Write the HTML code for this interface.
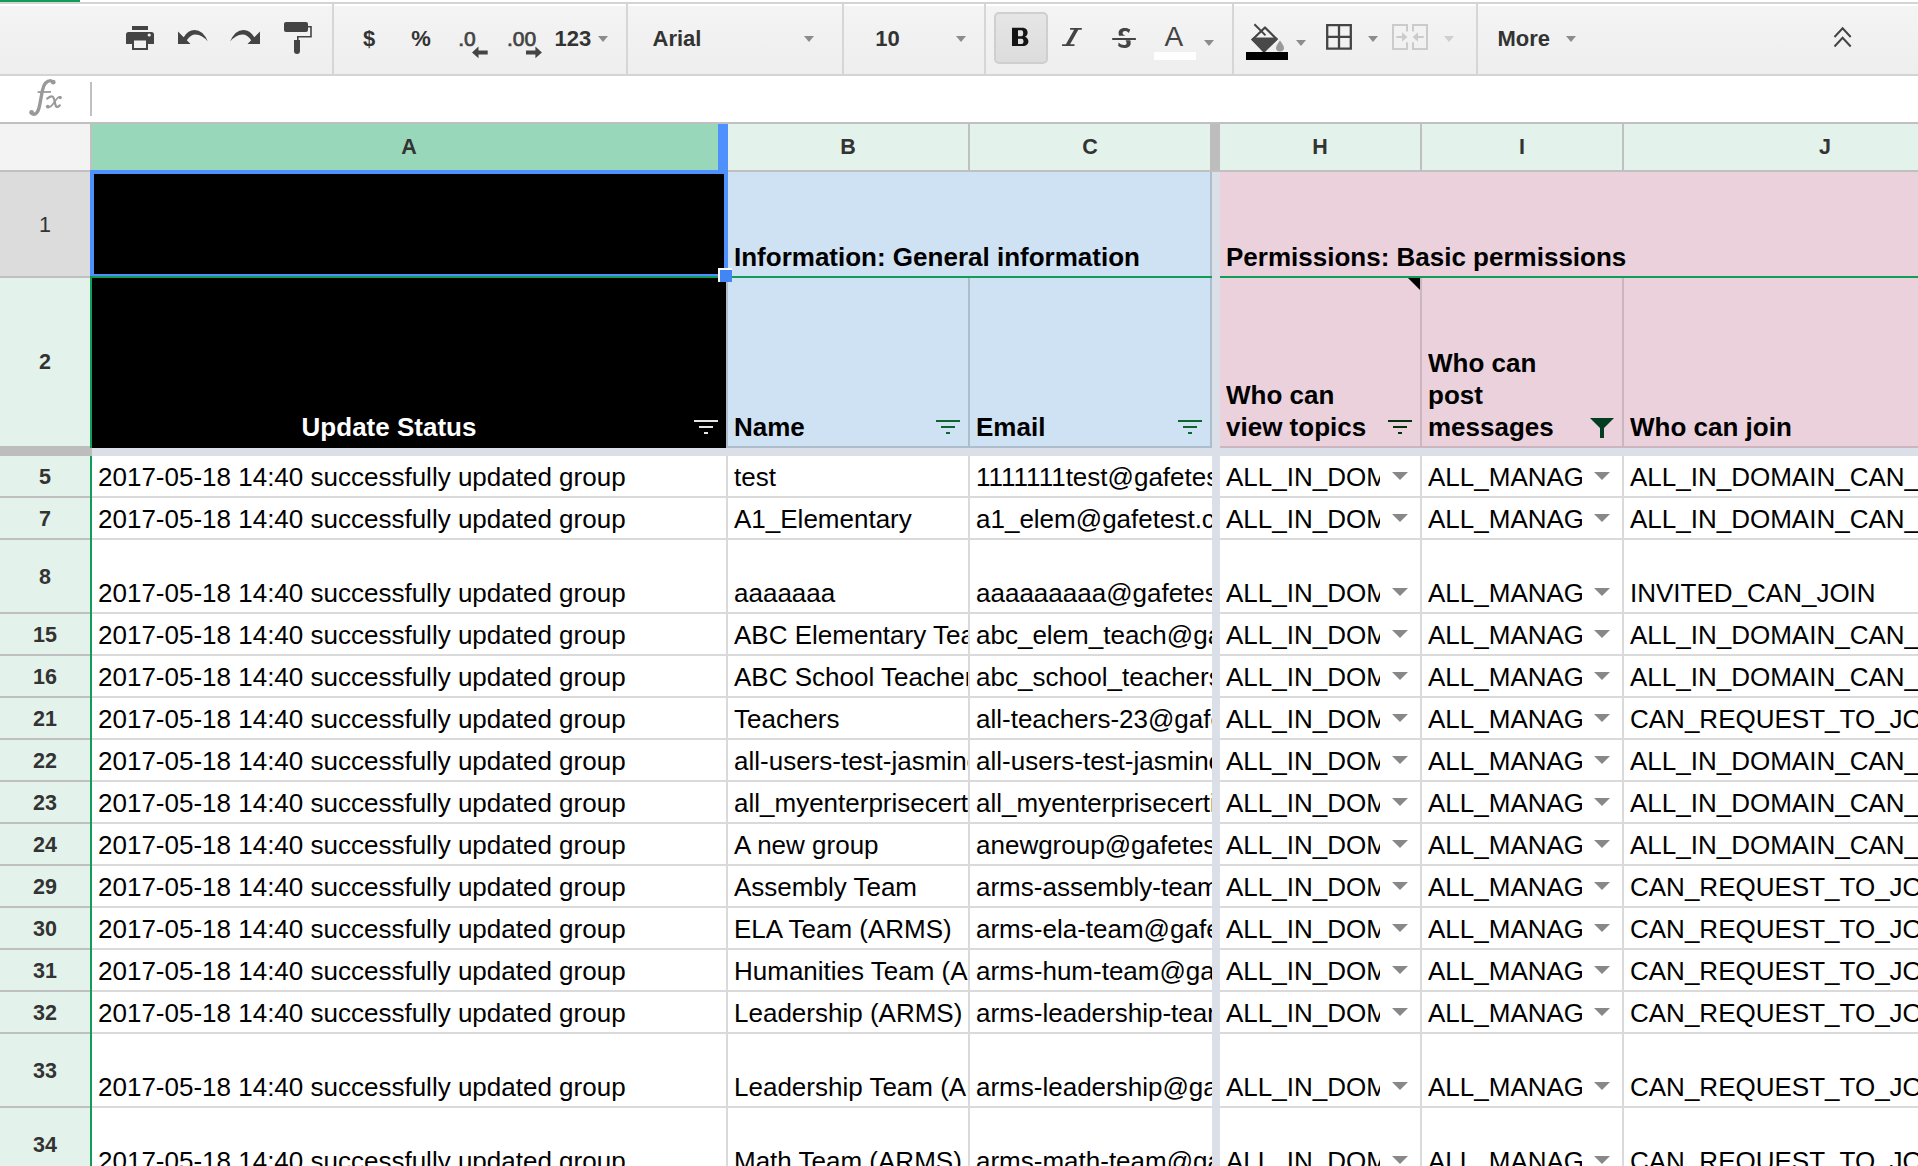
<!DOCTYPE html><html><head><meta charset="utf-8"><style>
*{margin:0;padding:0;box-sizing:border-box}
html,body{width:1918px;height:1166px;overflow:hidden;background:#fff}
body{position:relative;font-family:"Liberation Sans",sans-serif}
.r{position:absolute}
.t{position:absolute;height:30px;line-height:30px;font-size:26px;color:#000;white-space:pre;overflow:hidden}
.b{font-weight:bold}
.hd{position:absolute;font-weight:bold;font-size:21.5px;color:#333;text-align:center;white-space:pre}
svg{position:absolute;overflow:visible}
</style></head><body>
<div class="r" style="left:0px;top:2px;width:1918px;height:2px;background:#d4d4d4;"></div>
<div class="r" style="left:0px;top:0px;width:80px;height:2px;background:#0f9d58;"></div>
<div class="r" style="left:0px;top:4px;width:1918px;height:2px;background:#fff;"></div>
<div class="r" style="left:0px;top:6px;width:1918px;height:68px;background:linear-gradient(#f4f4f4,#eeeeee);"></div>
<div class="r" style="left:0px;top:74px;width:1918px;height:2px;background:#d4d4d4;"></div>
<div class="r" style="left:332px;top:4px;width:2px;height:70px;background:#d6d6d6;"></div>
<div class="r" style="left:626px;top:4px;width:2px;height:70px;background:#d6d6d6;"></div>
<div class="r" style="left:842px;top:4px;width:2px;height:70px;background:#d6d6d6;"></div>
<div class="r" style="left:984px;top:4px;width:2px;height:70px;background:#d6d6d6;"></div>
<div class="r" style="left:1232px;top:4px;width:2px;height:70px;background:#d6d6d6;"></div>
<div class="r" style="left:1476px;top:4px;width:2px;height:70px;background:#d6d6d6;"></div>
<svg style="left:0;top:0" width="1918" height="76"><rect x="132" y="26" width="16" height="4" fill="#444"/><path d="M126 44V34.5Q126 32 128.5 32H151.5Q154 32 154 34.5V44H148V50H132V44Z" fill="#444"/><rect x="134" y="40.5" width="12" height="7.5" fill="#f1f1f1"/><circle cx="149.2" cy="35" r="1.6" fill="#f1f1f1"/><path fill="#444" d="M178 31.5V44H190.5L186.8 40.3Q190.6 34.4 195.5 34.4Q202.5 34.6 207.8 41.6Q203.2 30 194.5 30Q188 30 183.7 37.2Z"/><path fill="#444" transform="translate(438 0) scale(-1 1)" d="M178 31.5V44H190.5L186.8 40.3Q190.6 34.4 195.5 34.4Q202.5 34.6 207.8 41.6Q203.2 30 194.5 30Q188 30 183.7 37.2Z"/><path fill="#444" d="M286 22H306Q308 22 308 24V30Q308 32 306 32H286Q284 32 284 30V24Q284 22 286 22Z"/><path fill="none" stroke="#444" stroke-width="1.6" d="M308 26.8H311V36.8H297.8V40"/><path fill="#444" d="M294 40H300V51Q300 54 297 54Q294 54 294 51Z"/><text x="369" y="46" font-family="Liberation Sans" font-size="22" font-weight="bold" font-style="normal" fill="#333" text-anchor="middle" >$</text><text x="421" y="46" font-family="Liberation Sans" font-size="22" font-weight="bold" font-style="normal" fill="#333" text-anchor="middle" >%</text><text x="467" y="46" font-family="Liberation Sans" font-size="21" font-weight="normal" font-style="normal" fill="#444" text-anchor="middle" stroke="#444" stroke-width="0.7">.0</text><text x="521.5" y="46" font-family="Liberation Sans" font-size="21" font-weight="normal" font-style="normal" fill="#444" text-anchor="middle" stroke="#444" stroke-width="0.7">.00</text><text x="572.8" y="46" font-family="Liberation Sans" font-size="22" font-weight="bold" font-style="normal" fill="#333" text-anchor="middle" >123</text><text x="652.5" y="46" font-family="Liberation Sans" font-size="22" font-weight="bold" font-style="normal" fill="#333" text-anchor="start" >Arial</text><text x="875.3" y="46" font-family="Liberation Sans" font-size="22" font-weight="bold" font-style="normal" fill="#333" text-anchor="start" >10</text><text x="1497.4" y="46" font-family="Liberation Sans" font-size="22" font-weight="bold" font-style="normal" fill="#333" text-anchor="start" >More</text><path fill="#444" d="M472 52.4L478.5 46.6V50.4H487.7V54.4H478.5V58.2Z"/><path fill="#444" d="M541.9 52.4L535.4 46.6V50.4H526V54.4H535.4V58.2Z"/><path fill="#8c8c8c" d="M598 36H608L603.0 42Z"/><path fill="#8c8c8c" d="M804 36H814L809.0 42Z"/><path fill="#8c8c8c" d="M956 36H966L961.0 42Z"/><path fill="#8c8c8c" d="M1204 40H1214L1209.0 46Z"/><path fill="#8c8c8c" d="M1296 40H1306L1301.0 46Z"/><path fill="#8c8c8c" d="M1368 36H1378L1373.0 42Z"/><path fill="#cfcfcf" d="M1444 36H1454L1449.0 42Z"/><path fill="#8c8c8c" d="M1566 36H1576L1571.0 42Z"/><defs><linearGradient id="bg1" x1="0" y1="0" x2="0" y2="1"><stop offset="0" stop-color="#e6e6e6"/><stop offset="1" stop-color="#dcdcdc"/></linearGradient></defs><rect x="995" y="13" width="52" height="50" rx="4" fill="url(#bg1)" stroke="#cfcfcf" stroke-width="2"/><path fill="#151515" fill-rule="evenodd" d="M1012 27.8H1022.3C1025.9 27.8 1027.6 30 1027.6 32.5C1027.6 34.6 1026.6 36 1025 36.8C1027.3 37.5 1028.4 39.5 1028.4 41.6C1028.4 44.3 1026.3 46.1 1022.8 46.1H1012Z M1018 30.2H1021.3C1022.6 30.2 1023.2 31.5 1023.2 33.2C1023.2 35 1022.6 36.2 1021.3 36.2H1018Z M1018 38.7H1021.6C1022.9 38.7 1023.5 40 1023.5 41.3C1023.5 42.8 1022.9 44 1021.6 44H1018Z"/><path fill="#444" d="M1070.1 28H1081.8V29.8H1078.3L1070.1 44.2H1074.5V46H1062.1V44.2H1065.9L1074.1 29.8H1070.1Z"/><path fill="#444" d="M1130.3 29.6C1128.5 28.3 1126.5 27.9 1124.5 27.9C1120.5 27.9 1118.6 30.2 1118.6 33C1118.6 34.1 1118.8 35 1119.1 35.7H1125.3C1123.4 35 1122.6 34.1 1122.6 33.1C1122.6 31.8 1123.6 31.1 1125.1 31.1C1126.3 31.1 1127.6 31.6 1128.8 32.9Z M1125.6 40.2H1130.2C1130.5 41 1130.7 42 1130.7 43C1130.7 46.2 1128.2 48.1 1124.3 48.1C1121.8 48.1 1119.7 47.3 1118.2 46.1L1118.6 42.6C1120.1 44.3 1122.1 45.1 1124 45.1C1125.7 45.1 1126.6 44.4 1126.6 43.3C1126.6 42 1126 41 1125.6 40.2Z"/><rect x="1112.2" y="38" width="23.7" height="2" fill="#444"/><text x="1173.8" y="46" font-family="Liberation Sans" font-size="28" font-weight="normal" font-style="normal" fill="#444" text-anchor="middle" >A</text><rect x="1154" y="52" width="42" height="8" fill="#fff"/><path d="M1254.4 24.3L1265.5 35.4" stroke="#444" stroke-width="2"/><path d="M1265 27.5L1276.5 39L1264 51.4L1252.5 39.5Z" fill="none" stroke="#444" stroke-width="2.2" stroke-linejoin="round"/><path d="M1253.3 37.9H1276.4L1277.6 39.2L1264 51.6L1251.4 39.5Z" fill="#494949" stroke="#494949" stroke-width="0.8" stroke-linejoin="round"/><path d="M1280 40.6Q1284 46 1284 48Q1284 51.4 1280 51.4Q1276 51.4 1276 48Q1276 46 1280 40.6Z" fill="#9a9a9a"/><rect x="1246" y="52" width="42" height="8" fill="#000"/><path d="M1327.2 25.2H1350.8V48.6H1327.2Z M1339 25.2V48.6 M1327.2 36.9H1350.8" fill="none" stroke="#444" stroke-width="2.3"/><path d="M1407 31.6V25H1393V49H1407V42.2 M1413 31.6V25H1427V49H1413V42.2" fill="none" stroke="#cbcbcb" stroke-width="2"/><path d="M1396.3 36H1402V32.3L1407.4 37L1402 41.7V38H1396.3Z" fill="#cbcbcb"/><path d="M1423.7 36H1418V32.3L1412.6 37L1418 41.7V38H1423.7Z" fill="#cbcbcb"/><path d="M1834.5 37L1842.6 28.2L1850.7 37 M1834.5 46.5L1842.6 37.7L1850.7 46.5" fill="none" stroke="#444" stroke-width="2"/></svg>
<div class="r" style="left:0px;top:122px;width:1918px;height:2px;background:#c0c0c0;"></div>
<div class="r" style="left:90px;top:82px;width:2px;height:34px;background:#c0c0c0;"></div>
<svg style="left:0;top:0" width="100" height="122"><g fill="none" stroke="#999" stroke-linecap="round"><path d="M32 113.6C35.5 115.6 38.3 112.5 39.6 105.5L42.4 90.5C43.8 83.5 46.8 80.6 50.8 80.6" stroke-width="3.4"/><path d="M37.6 92.1L51 91.8" stroke-width="1.7" stroke-linecap="butt"/><path d="M47.2 98.6C49.5 96.8 51.5 96 52.6 96.6C54.2 97.6 54.6 101 55.2 104C55.7 106.6 56.8 107.6 58.2 106.6L59.8 105.3" stroke-width="2.2"/><path d="M48 107.5C50 107.6 51.5 106 53 104L56.8 98.8C58 97.3 59.2 96.6 60.4 96.8" stroke-width="1.6"/></g><g fill="#999"><circle cx="31.6" cy="112.4" r="2.4"/><circle cx="53.2" cy="82.2" r="2.4"/><circle cx="47.8" cy="106.6" r="1.9"/><circle cx="60.2" cy="97.6" r="1.7"/></g></svg>
<div class="r" style="left:0px;top:124px;width:90px;height:46px;background:#f3f3f3;"></div>
<div class="r" style="left:90px;top:124px;width:2px;height:46px;background:#c0c0c0;"></div>
<div class="r" style="left:92px;top:124px;width:626px;height:46px;background:#98d7b9;"></div>
<div class="r" style="left:718px;top:124px;width:10px;height:46px;background:#4d90fe;"></div>
<div class="r" style="left:728px;top:124px;width:240px;height:46px;background:#e3f2ea;"></div>
<div class="r" style="left:968px;top:124px;width:2px;height:46px;background:#c0c0c0;"></div>
<div class="r" style="left:970px;top:124px;width:240px;height:46px;background:#e3f2ea;"></div>
<div class="r" style="left:1210px;top:124px;width:10px;height:46px;background:#bdbdbd;"></div>
<div class="r" style="left:1220px;top:124px;width:200px;height:46px;background:#e3f2ea;"></div>
<div class="r" style="left:1420px;top:124px;width:2px;height:46px;background:#c0c0c0;"></div>
<div class="r" style="left:1422px;top:124px;width:200px;height:46px;background:#e3f2ea;"></div>
<div class="r" style="left:1622px;top:124px;width:2px;height:46px;background:#c0c0c0;"></div>
<div class="r" style="left:1624px;top:124px;width:294px;height:46px;background:#e3f2ea;"></div>
<div class="r" style="left:0px;top:170px;width:1918px;height:2px;background:#c0c0c0;"></div>
<div class="hd" style="left:369px;top:135px;width:80px;line-height:24px">A</div>
<div class="hd" style="left:808px;top:135px;width:80px;line-height:24px">B</div>
<div class="hd" style="left:1050px;top:135px;width:80px;line-height:24px">C</div>
<div class="hd" style="left:1280px;top:135px;width:80px;line-height:24px">H</div>
<div class="hd" style="left:1482px;top:135px;width:80px;line-height:24px">I</div>
<div class="hd" style="left:1785px;top:135px;width:80px;line-height:24px">J</div>
<div class="r" style="left:0px;top:172px;width:90px;height:104px;background:#dcdcdc;"></div>
<div class="r" style="left:0px;top:276px;width:90px;height:2px;background:#c0c0c0;"></div>
<div class="r" style="left:0px;top:278px;width:90px;height:168px;background:#e3f2ea;"></div>
<div class="r" style="left:0px;top:446px;width:92px;height:10px;background:#bdbdbd;"></div>
<div class="hd" style="left:0;top:213px;width:90px;line-height:24px;font-weight:normal">1</div>
<div class="hd" style="left:0;top:350px;width:90px;line-height:24px">2</div>
<div class="r" style="left:0px;top:456px;width:90px;height:40px;background:#e3f2ea;"></div>
<div class="r" style="left:0px;top:496px;width:90px;height:2px;background:#c0c0c0;"></div>
<div class="hd" style="left:0;top:465px;width:90px;line-height:24px">5</div>
<div class="r" style="left:0px;top:498px;width:90px;height:40px;background:#e3f2ea;"></div>
<div class="r" style="left:0px;top:538px;width:90px;height:2px;background:#c0c0c0;"></div>
<div class="hd" style="left:0;top:507px;width:90px;line-height:24px">7</div>
<div class="r" style="left:0px;top:540px;width:90px;height:72px;background:#e3f2ea;"></div>
<div class="r" style="left:0px;top:612px;width:90px;height:2px;background:#c0c0c0;"></div>
<div class="hd" style="left:0;top:565px;width:90px;line-height:24px">8</div>
<div class="r" style="left:0px;top:614px;width:90px;height:40px;background:#e3f2ea;"></div>
<div class="r" style="left:0px;top:654px;width:90px;height:2px;background:#c0c0c0;"></div>
<div class="hd" style="left:0;top:623px;width:90px;line-height:24px">15</div>
<div class="r" style="left:0px;top:656px;width:90px;height:40px;background:#e3f2ea;"></div>
<div class="r" style="left:0px;top:696px;width:90px;height:2px;background:#c0c0c0;"></div>
<div class="hd" style="left:0;top:665px;width:90px;line-height:24px">16</div>
<div class="r" style="left:0px;top:698px;width:90px;height:40px;background:#e3f2ea;"></div>
<div class="r" style="left:0px;top:738px;width:90px;height:2px;background:#c0c0c0;"></div>
<div class="hd" style="left:0;top:707px;width:90px;line-height:24px">21</div>
<div class="r" style="left:0px;top:740px;width:90px;height:40px;background:#e3f2ea;"></div>
<div class="r" style="left:0px;top:780px;width:90px;height:2px;background:#c0c0c0;"></div>
<div class="hd" style="left:0;top:749px;width:90px;line-height:24px">22</div>
<div class="r" style="left:0px;top:782px;width:90px;height:40px;background:#e3f2ea;"></div>
<div class="r" style="left:0px;top:822px;width:90px;height:2px;background:#c0c0c0;"></div>
<div class="hd" style="left:0;top:791px;width:90px;line-height:24px">23</div>
<div class="r" style="left:0px;top:824px;width:90px;height:40px;background:#e3f2ea;"></div>
<div class="r" style="left:0px;top:864px;width:90px;height:2px;background:#c0c0c0;"></div>
<div class="hd" style="left:0;top:833px;width:90px;line-height:24px">24</div>
<div class="r" style="left:0px;top:866px;width:90px;height:40px;background:#e3f2ea;"></div>
<div class="r" style="left:0px;top:906px;width:90px;height:2px;background:#c0c0c0;"></div>
<div class="hd" style="left:0;top:875px;width:90px;line-height:24px">29</div>
<div class="r" style="left:0px;top:908px;width:90px;height:40px;background:#e3f2ea;"></div>
<div class="r" style="left:0px;top:948px;width:90px;height:2px;background:#c0c0c0;"></div>
<div class="hd" style="left:0;top:917px;width:90px;line-height:24px">30</div>
<div class="r" style="left:0px;top:950px;width:90px;height:40px;background:#e3f2ea;"></div>
<div class="r" style="left:0px;top:990px;width:90px;height:2px;background:#c0c0c0;"></div>
<div class="hd" style="left:0;top:959px;width:90px;line-height:24px">31</div>
<div class="r" style="left:0px;top:992px;width:90px;height:40px;background:#e3f2ea;"></div>
<div class="r" style="left:0px;top:1032px;width:90px;height:2px;background:#c0c0c0;"></div>
<div class="hd" style="left:0;top:1001px;width:90px;line-height:24px">32</div>
<div class="r" style="left:0px;top:1034px;width:90px;height:72px;background:#e3f2ea;"></div>
<div class="r" style="left:0px;top:1106px;width:90px;height:2px;background:#c0c0c0;"></div>
<div class="hd" style="left:0;top:1059px;width:90px;line-height:24px">33</div>
<div class="r" style="left:0px;top:1108px;width:90px;height:72px;background:#e3f2ea;"></div>
<div class="r" style="left:0px;top:1180px;width:90px;height:2px;background:#c0c0c0;"></div>
<div class="hd" style="left:0;top:1133px;width:90px;line-height:24px">34</div>
<div class="r" style="left:90px;top:278px;width:2px;height:170px;background:#0f9d58;"></div>
<div class="r" style="left:90px;top:456px;width:2px;height:710px;background:#0f9d58;"></div>
<div class="r" style="left:92px;top:172px;width:634px;height:276px;background:#000;"></div>
<div class="r" style="left:728px;top:172px;width:482px;height:104px;background:#cfe2f3;"></div>
<div class="r" style="left:1220px;top:172px;width:698px;height:104px;background:#ead1dc;"></div>
<div class="r" style="left:726px;top:278px;width:2px;height:170px;background:#adbdcc;"></div>
<div class="r" style="left:728px;top:278px;width:240px;height:168px;background:#cfe2f3;"></div>
<div class="r" style="left:968px;top:278px;width:2px;height:170px;background:#adbdcc;"></div>
<div class="r" style="left:970px;top:278px;width:240px;height:168px;background:#cfe2f3;"></div>
<div class="r" style="left:1210px;top:172px;width:2px;height:276px;background:#adbdcc;"></div>
<div class="r" style="left:728px;top:446px;width:484px;height:2px;background:#adbdcc;"></div>
<div class="r" style="left:1220px;top:278px;width:200px;height:168px;background:#ead1dc;"></div>
<div class="r" style="left:1420px;top:278px;width:2px;height:170px;background:#cbb6c0;"></div>
<div class="r" style="left:1422px;top:278px;width:200px;height:168px;background:#ead1dc;"></div>
<div class="r" style="left:1622px;top:278px;width:2px;height:170px;background:#cbb6c0;"></div>
<div class="r" style="left:1624px;top:278px;width:294px;height:168px;background:#ead1dc;"></div>
<div class="r" style="left:1220px;top:446px;width:698px;height:2px;background:#cbb6c0;"></div>
<div class="r" style="left:90px;top:276px;width:1122px;height:2px;background:#0f9d58;"></div>
<div class="r" style="left:1220px;top:276px;width:698px;height:2px;background:#0f9d58;"></div>
<div class="r" style="left:92px;top:448px;width:1826px;height:8px;background:#dadfe8;"></div>
<div class="r" style="left:1212px;top:172px;width:8px;height:994px;background:#dadfe8;"></div>
<div class="t b" style="left:734px;top:242px;width:470px;">Information: General information</div>
<div class="t b" style="left:1226px;top:242px;width:690px;">Permissions: Basic permissions</div>
<div class="t b" style="left:92px;top:412px;width:594px;color:#fff;text-align:center">Update Status</div>
<div class="t b" style="left:734px;top:412px;width:190px;">Name</div>
<div class="t b" style="left:976px;top:412px;width:190px;">Email</div>
<div class="t b" style="left:1226px;top:380px;width:160px;">Who can</div>
<div class="t b" style="left:1226px;top:412px;width:160px;">view topics</div>
<div class="t b" style="left:1428px;top:348px;width:160px;">Who can</div>
<div class="t b" style="left:1428px;top:380px;width:160px;">post</div>
<div class="t b" style="left:1428px;top:412px;width:160px;">messages</div>
<div class="t b" style="left:1630px;top:412px;width:280px;">Who can join</div>
<div class="r" style="left:694px;top:420px;width:24px;height:2px;background:#e6e6e6;"></div>
<div class="r" style="left:699px;top:426px;width:14px;height:2px;background:#e6e6e6;"></div>
<div class="r" style="left:704px;top:432px;width:4px;height:2px;background:#e6e6e6;"></div>
<div class="r" style="left:936px;top:420px;width:24px;height:2px;background:#0d652d;"></div>
<div class="r" style="left:941px;top:426px;width:14px;height:2px;background:#0d652d;"></div>
<div class="r" style="left:946px;top:432px;width:4px;height:2px;background:#0d652d;"></div>
<div class="r" style="left:1178px;top:420px;width:24px;height:2px;background:#0d652d;"></div>
<div class="r" style="left:1183px;top:426px;width:14px;height:2px;background:#0d652d;"></div>
<div class="r" style="left:1188px;top:432px;width:4px;height:2px;background:#0d652d;"></div>
<div class="r" style="left:1388px;top:420px;width:24px;height:2px;background:#00300f;"></div>
<div class="r" style="left:1393px;top:426px;width:14px;height:2px;background:#00300f;"></div>
<div class="r" style="left:1398px;top:432px;width:4px;height:2px;background:#00300f;"></div>
<svg style="left:0;top:0" width="1918" height="460"><path d="M1590 418H1614L1604 428V438H1600V428Z" fill="#053d22"/><path d="M1408 278H1420V290Z" fill="#000"/></svg>
<div class="r" style="left:92px;top:496px;width:1120px;height:2px;background:#dadada;"></div>
<div class="r" style="left:1220px;top:496px;width:698px;height:2px;background:#dadada;"></div>
<div class="r" style="left:726px;top:456px;width:2px;height:42px;background:#dadada;"></div>
<div class="r" style="left:968px;top:456px;width:2px;height:42px;background:#dadada;"></div>
<div class="r" style="left:1420px;top:456px;width:2px;height:42px;background:#dadada;"></div>
<div class="r" style="left:1622px;top:456px;width:2px;height:42px;background:#dadada;"></div>
<div class="t" style="left:98px;top:462px;width:626px;">2017-05-18 14:40 successfully updated group</div>
<div class="t" style="left:734px;top:462px;width:234px;">test</div>
<div class="t" style="left:976px;top:462px;width:236px;">1111111test@gafetest.com</div>
<div class="t" style="left:1226px;top:462px;width:154px;">ALL_IN_DOMAIN_CAN_VIEW</div>
<div class="t" style="left:1428px;top:462px;width:154px;">ALL_MANAGERS_CAN_POST</div>
<div class="t" style="left:1630px;top:462px;width:288px;">ALL_IN_DOMAIN_CAN_JOIN</div>
<svg style="left:1392px;top:472px" width="16" height="8"><path d="M0 0H16L8 8Z" fill="#888"/></svg>
<svg style="left:1594px;top:472px" width="16" height="8"><path d="M0 0H16L8 8Z" fill="#888"/></svg>
<div class="r" style="left:92px;top:538px;width:1120px;height:2px;background:#dadada;"></div>
<div class="r" style="left:1220px;top:538px;width:698px;height:2px;background:#dadada;"></div>
<div class="r" style="left:726px;top:498px;width:2px;height:42px;background:#dadada;"></div>
<div class="r" style="left:968px;top:498px;width:2px;height:42px;background:#dadada;"></div>
<div class="r" style="left:1420px;top:498px;width:2px;height:42px;background:#dadada;"></div>
<div class="r" style="left:1622px;top:498px;width:2px;height:42px;background:#dadada;"></div>
<div class="t" style="left:98px;top:504px;width:626px;">2017-05-18 14:40 successfully updated group</div>
<div class="t" style="left:734px;top:504px;width:234px;">A1_Elementary</div>
<div class="t" style="left:976px;top:504px;width:236px;">a1_elem@gafetest.com</div>
<div class="t" style="left:1226px;top:504px;width:154px;">ALL_IN_DOMAIN_CAN_VIEW</div>
<div class="t" style="left:1428px;top:504px;width:154px;">ALL_MANAGERS_CAN_POST</div>
<div class="t" style="left:1630px;top:504px;width:288px;">ALL_IN_DOMAIN_CAN_JOIN</div>
<svg style="left:1392px;top:514px" width="16" height="8"><path d="M0 0H16L8 8Z" fill="#888"/></svg>
<svg style="left:1594px;top:514px" width="16" height="8"><path d="M0 0H16L8 8Z" fill="#888"/></svg>
<div class="r" style="left:92px;top:612px;width:1120px;height:2px;background:#dadada;"></div>
<div class="r" style="left:1220px;top:612px;width:698px;height:2px;background:#dadada;"></div>
<div class="r" style="left:726px;top:540px;width:2px;height:74px;background:#dadada;"></div>
<div class="r" style="left:968px;top:540px;width:2px;height:74px;background:#dadada;"></div>
<div class="r" style="left:1420px;top:540px;width:2px;height:74px;background:#dadada;"></div>
<div class="r" style="left:1622px;top:540px;width:2px;height:74px;background:#dadada;"></div>
<div class="t" style="left:98px;top:578px;width:626px;">2017-05-18 14:40 successfully updated group</div>
<div class="t" style="left:734px;top:578px;width:234px;">aaaaaaa</div>
<div class="t" style="left:976px;top:578px;width:236px;">aaaaaaaaa@gafetest.com</div>
<div class="t" style="left:1226px;top:578px;width:154px;">ALL_IN_DOMAIN_CAN_VIEW</div>
<div class="t" style="left:1428px;top:578px;width:154px;">ALL_MANAGERS_CAN_POST</div>
<div class="t" style="left:1630px;top:578px;width:288px;">INVITED_CAN_JOIN</div>
<svg style="left:1392px;top:588px" width="16" height="8"><path d="M0 0H16L8 8Z" fill="#888"/></svg>
<svg style="left:1594px;top:588px" width="16" height="8"><path d="M0 0H16L8 8Z" fill="#888"/></svg>
<div class="r" style="left:92px;top:654px;width:1120px;height:2px;background:#dadada;"></div>
<div class="r" style="left:1220px;top:654px;width:698px;height:2px;background:#dadada;"></div>
<div class="r" style="left:726px;top:614px;width:2px;height:42px;background:#dadada;"></div>
<div class="r" style="left:968px;top:614px;width:2px;height:42px;background:#dadada;"></div>
<div class="r" style="left:1420px;top:614px;width:2px;height:42px;background:#dadada;"></div>
<div class="r" style="left:1622px;top:614px;width:2px;height:42px;background:#dadada;"></div>
<div class="t" style="left:98px;top:620px;width:626px;">2017-05-18 14:40 successfully updated group</div>
<div class="t" style="left:734px;top:620px;width:234px;">ABC Elementary Teachers</div>
<div class="t" style="left:976px;top:620px;width:236px;">abc_elem_teach@gafetest.com</div>
<div class="t" style="left:1226px;top:620px;width:154px;">ALL_IN_DOMAIN_CAN_VIEW</div>
<div class="t" style="left:1428px;top:620px;width:154px;">ALL_MANAGERS_CAN_POST</div>
<div class="t" style="left:1630px;top:620px;width:288px;">ALL_IN_DOMAIN_CAN_JOIN</div>
<svg style="left:1392px;top:630px" width="16" height="8"><path d="M0 0H16L8 8Z" fill="#888"/></svg>
<svg style="left:1594px;top:630px" width="16" height="8"><path d="M0 0H16L8 8Z" fill="#888"/></svg>
<div class="r" style="left:92px;top:696px;width:1120px;height:2px;background:#dadada;"></div>
<div class="r" style="left:1220px;top:696px;width:698px;height:2px;background:#dadada;"></div>
<div class="r" style="left:726px;top:656px;width:2px;height:42px;background:#dadada;"></div>
<div class="r" style="left:968px;top:656px;width:2px;height:42px;background:#dadada;"></div>
<div class="r" style="left:1420px;top:656px;width:2px;height:42px;background:#dadada;"></div>
<div class="r" style="left:1622px;top:656px;width:2px;height:42px;background:#dadada;"></div>
<div class="t" style="left:98px;top:662px;width:626px;">2017-05-18 14:40 successfully updated group</div>
<div class="t" style="left:734px;top:662px;width:234px;">ABC School Teachers</div>
<div class="t" style="left:976px;top:662px;width:236px;">abc_school_teachers@gafetest.com</div>
<div class="t" style="left:1226px;top:662px;width:154px;">ALL_IN_DOMAIN_CAN_VIEW</div>
<div class="t" style="left:1428px;top:662px;width:154px;">ALL_MANAGERS_CAN_POST</div>
<div class="t" style="left:1630px;top:662px;width:288px;">ALL_IN_DOMAIN_CAN_JOIN</div>
<svg style="left:1392px;top:672px" width="16" height="8"><path d="M0 0H16L8 8Z" fill="#888"/></svg>
<svg style="left:1594px;top:672px" width="16" height="8"><path d="M0 0H16L8 8Z" fill="#888"/></svg>
<div class="r" style="left:92px;top:738px;width:1120px;height:2px;background:#dadada;"></div>
<div class="r" style="left:1220px;top:738px;width:698px;height:2px;background:#dadada;"></div>
<div class="r" style="left:726px;top:698px;width:2px;height:42px;background:#dadada;"></div>
<div class="r" style="left:968px;top:698px;width:2px;height:42px;background:#dadada;"></div>
<div class="r" style="left:1420px;top:698px;width:2px;height:42px;background:#dadada;"></div>
<div class="r" style="left:1622px;top:698px;width:2px;height:42px;background:#dadada;"></div>
<div class="t" style="left:98px;top:704px;width:626px;">2017-05-18 14:40 successfully updated group</div>
<div class="t" style="left:734px;top:704px;width:234px;">Teachers</div>
<div class="t" style="left:976px;top:704px;width:236px;">all-teachers-23@gafetest.com</div>
<div class="t" style="left:1226px;top:704px;width:154px;">ALL_IN_DOMAIN_CAN_VIEW</div>
<div class="t" style="left:1428px;top:704px;width:154px;">ALL_MANAGERS_CAN_POST</div>
<div class="t" style="left:1630px;top:704px;width:288px;">CAN_REQUEST_TO_JOIN</div>
<svg style="left:1392px;top:714px" width="16" height="8"><path d="M0 0H16L8 8Z" fill="#888"/></svg>
<svg style="left:1594px;top:714px" width="16" height="8"><path d="M0 0H16L8 8Z" fill="#888"/></svg>
<div class="r" style="left:92px;top:780px;width:1120px;height:2px;background:#dadada;"></div>
<div class="r" style="left:1220px;top:780px;width:698px;height:2px;background:#dadada;"></div>
<div class="r" style="left:726px;top:740px;width:2px;height:42px;background:#dadada;"></div>
<div class="r" style="left:968px;top:740px;width:2px;height:42px;background:#dadada;"></div>
<div class="r" style="left:1420px;top:740px;width:2px;height:42px;background:#dadada;"></div>
<div class="r" style="left:1622px;top:740px;width:2px;height:42px;background:#dadada;"></div>
<div class="t" style="left:98px;top:746px;width:626px;">2017-05-18 14:40 successfully updated group</div>
<div class="t" style="left:734px;top:746px;width:234px;">all-users-test-jasmine</div>
<div class="t" style="left:976px;top:746px;width:236px;">all-users-test-jasmine@gafetest.com</div>
<div class="t" style="left:1226px;top:746px;width:154px;">ALL_IN_DOMAIN_CAN_VIEW</div>
<div class="t" style="left:1428px;top:746px;width:154px;">ALL_MANAGERS_CAN_POST</div>
<div class="t" style="left:1630px;top:746px;width:288px;">ALL_IN_DOMAIN_CAN_JOIN</div>
<svg style="left:1392px;top:756px" width="16" height="8"><path d="M0 0H16L8 8Z" fill="#888"/></svg>
<svg style="left:1594px;top:756px" width="16" height="8"><path d="M0 0H16L8 8Z" fill="#888"/></svg>
<div class="r" style="left:92px;top:822px;width:1120px;height:2px;background:#dadada;"></div>
<div class="r" style="left:1220px;top:822px;width:698px;height:2px;background:#dadada;"></div>
<div class="r" style="left:726px;top:782px;width:2px;height:42px;background:#dadada;"></div>
<div class="r" style="left:968px;top:782px;width:2px;height:42px;background:#dadada;"></div>
<div class="r" style="left:1420px;top:782px;width:2px;height:42px;background:#dadada;"></div>
<div class="r" style="left:1622px;top:782px;width:2px;height:42px;background:#dadada;"></div>
<div class="t" style="left:98px;top:788px;width:626px;">2017-05-18 14:40 successfully updated group</div>
<div class="t" style="left:734px;top:788px;width:234px;">all_myenterprisecertification</div>
<div class="t" style="left:976px;top:788px;width:236px;">all_myenterprisecertification@gafetest.com</div>
<div class="t" style="left:1226px;top:788px;width:154px;">ALL_IN_DOMAIN_CAN_VIEW</div>
<div class="t" style="left:1428px;top:788px;width:154px;">ALL_MANAGERS_CAN_POST</div>
<div class="t" style="left:1630px;top:788px;width:288px;">ALL_IN_DOMAIN_CAN_JOIN</div>
<svg style="left:1392px;top:798px" width="16" height="8"><path d="M0 0H16L8 8Z" fill="#888"/></svg>
<svg style="left:1594px;top:798px" width="16" height="8"><path d="M0 0H16L8 8Z" fill="#888"/></svg>
<div class="r" style="left:92px;top:864px;width:1120px;height:2px;background:#dadada;"></div>
<div class="r" style="left:1220px;top:864px;width:698px;height:2px;background:#dadada;"></div>
<div class="r" style="left:726px;top:824px;width:2px;height:42px;background:#dadada;"></div>
<div class="r" style="left:968px;top:824px;width:2px;height:42px;background:#dadada;"></div>
<div class="r" style="left:1420px;top:824px;width:2px;height:42px;background:#dadada;"></div>
<div class="r" style="left:1622px;top:824px;width:2px;height:42px;background:#dadada;"></div>
<div class="t" style="left:98px;top:830px;width:626px;">2017-05-18 14:40 successfully updated group</div>
<div class="t" style="left:734px;top:830px;width:234px;">A new group</div>
<div class="t" style="left:976px;top:830px;width:236px;">anewgroup@gafetest.com</div>
<div class="t" style="left:1226px;top:830px;width:154px;">ALL_IN_DOMAIN_CAN_VIEW</div>
<div class="t" style="left:1428px;top:830px;width:154px;">ALL_MANAGERS_CAN_POST</div>
<div class="t" style="left:1630px;top:830px;width:288px;">ALL_IN_DOMAIN_CAN_JOIN</div>
<svg style="left:1392px;top:840px" width="16" height="8"><path d="M0 0H16L8 8Z" fill="#888"/></svg>
<svg style="left:1594px;top:840px" width="16" height="8"><path d="M0 0H16L8 8Z" fill="#888"/></svg>
<div class="r" style="left:92px;top:906px;width:1120px;height:2px;background:#dadada;"></div>
<div class="r" style="left:1220px;top:906px;width:698px;height:2px;background:#dadada;"></div>
<div class="r" style="left:726px;top:866px;width:2px;height:42px;background:#dadada;"></div>
<div class="r" style="left:968px;top:866px;width:2px;height:42px;background:#dadada;"></div>
<div class="r" style="left:1420px;top:866px;width:2px;height:42px;background:#dadada;"></div>
<div class="r" style="left:1622px;top:866px;width:2px;height:42px;background:#dadada;"></div>
<div class="t" style="left:98px;top:872px;width:626px;">2017-05-18 14:40 successfully updated group</div>
<div class="t" style="left:734px;top:872px;width:234px;">Assembly Team</div>
<div class="t" style="left:976px;top:872px;width:236px;">arms-assembly-team@gafetest.com</div>
<div class="t" style="left:1226px;top:872px;width:154px;">ALL_IN_DOMAIN_CAN_VIEW</div>
<div class="t" style="left:1428px;top:872px;width:154px;">ALL_MANAGERS_CAN_POST</div>
<div class="t" style="left:1630px;top:872px;width:288px;">CAN_REQUEST_TO_JOIN</div>
<svg style="left:1392px;top:882px" width="16" height="8"><path d="M0 0H16L8 8Z" fill="#888"/></svg>
<svg style="left:1594px;top:882px" width="16" height="8"><path d="M0 0H16L8 8Z" fill="#888"/></svg>
<div class="r" style="left:92px;top:948px;width:1120px;height:2px;background:#dadada;"></div>
<div class="r" style="left:1220px;top:948px;width:698px;height:2px;background:#dadada;"></div>
<div class="r" style="left:726px;top:908px;width:2px;height:42px;background:#dadada;"></div>
<div class="r" style="left:968px;top:908px;width:2px;height:42px;background:#dadada;"></div>
<div class="r" style="left:1420px;top:908px;width:2px;height:42px;background:#dadada;"></div>
<div class="r" style="left:1622px;top:908px;width:2px;height:42px;background:#dadada;"></div>
<div class="t" style="left:98px;top:914px;width:626px;">2017-05-18 14:40 successfully updated group</div>
<div class="t" style="left:734px;top:914px;width:234px;">ELA Team (ARMS)</div>
<div class="t" style="left:976px;top:914px;width:236px;">arms-ela-team@gafetest.com</div>
<div class="t" style="left:1226px;top:914px;width:154px;">ALL_IN_DOMAIN_CAN_VIEW</div>
<div class="t" style="left:1428px;top:914px;width:154px;">ALL_MANAGERS_CAN_POST</div>
<div class="t" style="left:1630px;top:914px;width:288px;">CAN_REQUEST_TO_JOIN</div>
<svg style="left:1392px;top:924px" width="16" height="8"><path d="M0 0H16L8 8Z" fill="#888"/></svg>
<svg style="left:1594px;top:924px" width="16" height="8"><path d="M0 0H16L8 8Z" fill="#888"/></svg>
<div class="r" style="left:92px;top:990px;width:1120px;height:2px;background:#dadada;"></div>
<div class="r" style="left:1220px;top:990px;width:698px;height:2px;background:#dadada;"></div>
<div class="r" style="left:726px;top:950px;width:2px;height:42px;background:#dadada;"></div>
<div class="r" style="left:968px;top:950px;width:2px;height:42px;background:#dadada;"></div>
<div class="r" style="left:1420px;top:950px;width:2px;height:42px;background:#dadada;"></div>
<div class="r" style="left:1622px;top:950px;width:2px;height:42px;background:#dadada;"></div>
<div class="t" style="left:98px;top:956px;width:626px;">2017-05-18 14:40 successfully updated group</div>
<div class="t" style="left:734px;top:956px;width:234px;">Humanities Team (ARMS)</div>
<div class="t" style="left:976px;top:956px;width:236px;">arms-hum-team@gafetest.com</div>
<div class="t" style="left:1226px;top:956px;width:154px;">ALL_IN_DOMAIN_CAN_VIEW</div>
<div class="t" style="left:1428px;top:956px;width:154px;">ALL_MANAGERS_CAN_POST</div>
<div class="t" style="left:1630px;top:956px;width:288px;">CAN_REQUEST_TO_JOIN</div>
<svg style="left:1392px;top:966px" width="16" height="8"><path d="M0 0H16L8 8Z" fill="#888"/></svg>
<svg style="left:1594px;top:966px" width="16" height="8"><path d="M0 0H16L8 8Z" fill="#888"/></svg>
<div class="r" style="left:92px;top:1032px;width:1120px;height:2px;background:#dadada;"></div>
<div class="r" style="left:1220px;top:1032px;width:698px;height:2px;background:#dadada;"></div>
<div class="r" style="left:726px;top:992px;width:2px;height:42px;background:#dadada;"></div>
<div class="r" style="left:968px;top:992px;width:2px;height:42px;background:#dadada;"></div>
<div class="r" style="left:1420px;top:992px;width:2px;height:42px;background:#dadada;"></div>
<div class="r" style="left:1622px;top:992px;width:2px;height:42px;background:#dadada;"></div>
<div class="t" style="left:98px;top:998px;width:626px;">2017-05-18 14:40 successfully updated group</div>
<div class="t" style="left:734px;top:998px;width:234px;">Leadership (ARMS)</div>
<div class="t" style="left:976px;top:998px;width:236px;">arms-leadership-team@gafetest.com</div>
<div class="t" style="left:1226px;top:998px;width:154px;">ALL_IN_DOMAIN_CAN_VIEW</div>
<div class="t" style="left:1428px;top:998px;width:154px;">ALL_MANAGERS_CAN_POST</div>
<div class="t" style="left:1630px;top:998px;width:288px;">CAN_REQUEST_TO_JOIN</div>
<svg style="left:1392px;top:1008px" width="16" height="8"><path d="M0 0H16L8 8Z" fill="#888"/></svg>
<svg style="left:1594px;top:1008px" width="16" height="8"><path d="M0 0H16L8 8Z" fill="#888"/></svg>
<div class="r" style="left:92px;top:1106px;width:1120px;height:2px;background:#dadada;"></div>
<div class="r" style="left:1220px;top:1106px;width:698px;height:2px;background:#dadada;"></div>
<div class="r" style="left:726px;top:1034px;width:2px;height:74px;background:#dadada;"></div>
<div class="r" style="left:968px;top:1034px;width:2px;height:74px;background:#dadada;"></div>
<div class="r" style="left:1420px;top:1034px;width:2px;height:74px;background:#dadada;"></div>
<div class="r" style="left:1622px;top:1034px;width:2px;height:74px;background:#dadada;"></div>
<div class="t" style="left:98px;top:1072px;width:626px;">2017-05-18 14:40 successfully updated group</div>
<div class="t" style="left:734px;top:1072px;width:234px;">Leadership Team (ARMS)</div>
<div class="t" style="left:976px;top:1072px;width:236px;">arms-leadership@gafetest.com</div>
<div class="t" style="left:1226px;top:1072px;width:154px;">ALL_IN_DOMAIN_CAN_VIEW</div>
<div class="t" style="left:1428px;top:1072px;width:154px;">ALL_MANAGERS_CAN_POST</div>
<div class="t" style="left:1630px;top:1072px;width:288px;">CAN_REQUEST_TO_JOIN</div>
<svg style="left:1392px;top:1082px" width="16" height="8"><path d="M0 0H16L8 8Z" fill="#888"/></svg>
<svg style="left:1594px;top:1082px" width="16" height="8"><path d="M0 0H16L8 8Z" fill="#888"/></svg>
<div class="r" style="left:92px;top:1180px;width:1120px;height:2px;background:#dadada;"></div>
<div class="r" style="left:1220px;top:1180px;width:698px;height:2px;background:#dadada;"></div>
<div class="r" style="left:726px;top:1108px;width:2px;height:74px;background:#dadada;"></div>
<div class="r" style="left:968px;top:1108px;width:2px;height:74px;background:#dadada;"></div>
<div class="r" style="left:1420px;top:1108px;width:2px;height:74px;background:#dadada;"></div>
<div class="r" style="left:1622px;top:1108px;width:2px;height:74px;background:#dadada;"></div>
<div class="t" style="left:98px;top:1146px;width:626px;">2017-05-18 14:40 successfully updated group</div>
<div class="t" style="left:734px;top:1146px;width:234px;">Math Team (ARMS)</div>
<div class="t" style="left:976px;top:1146px;width:236px;">arms-math-team@gafetest.com</div>
<div class="t" style="left:1226px;top:1146px;width:154px;">ALL_IN_DOMAIN_CAN_VIEW</div>
<div class="t" style="left:1428px;top:1146px;width:154px;">ALL_MANAGERS_CAN_POST</div>
<div class="t" style="left:1630px;top:1146px;width:288px;">CAN_REQUEST_TO_JOIN</div>
<svg style="left:1392px;top:1156px" width="16" height="8"><path d="M0 0H16L8 8Z" fill="#888"/></svg>
<svg style="left:1594px;top:1156px" width="16" height="8"><path d="M0 0H16L8 8Z" fill="#888"/></svg>
<div class="r" style="left:90px;top:170px;width:638px;height:4px;background:#4d90fe;"></div>
<div class="r" style="left:90px;top:170px;width:4px;height:106px;background:#4d90fe;"></div>
<div class="r" style="left:724px;top:170px;width:4px;height:106px;background:#4d90fe;"></div>
<div class="r" style="left:90px;top:274px;width:634px;height:2px;background:#4d90fe;"></div>
<div class="r" style="left:718px;top:268px;width:14px;height:14px;background:#fff;"></div>
<div class="r" style="left:720px;top:270px;width:12px;height:12px;background:#4285f4;"></div>
</body></html>
